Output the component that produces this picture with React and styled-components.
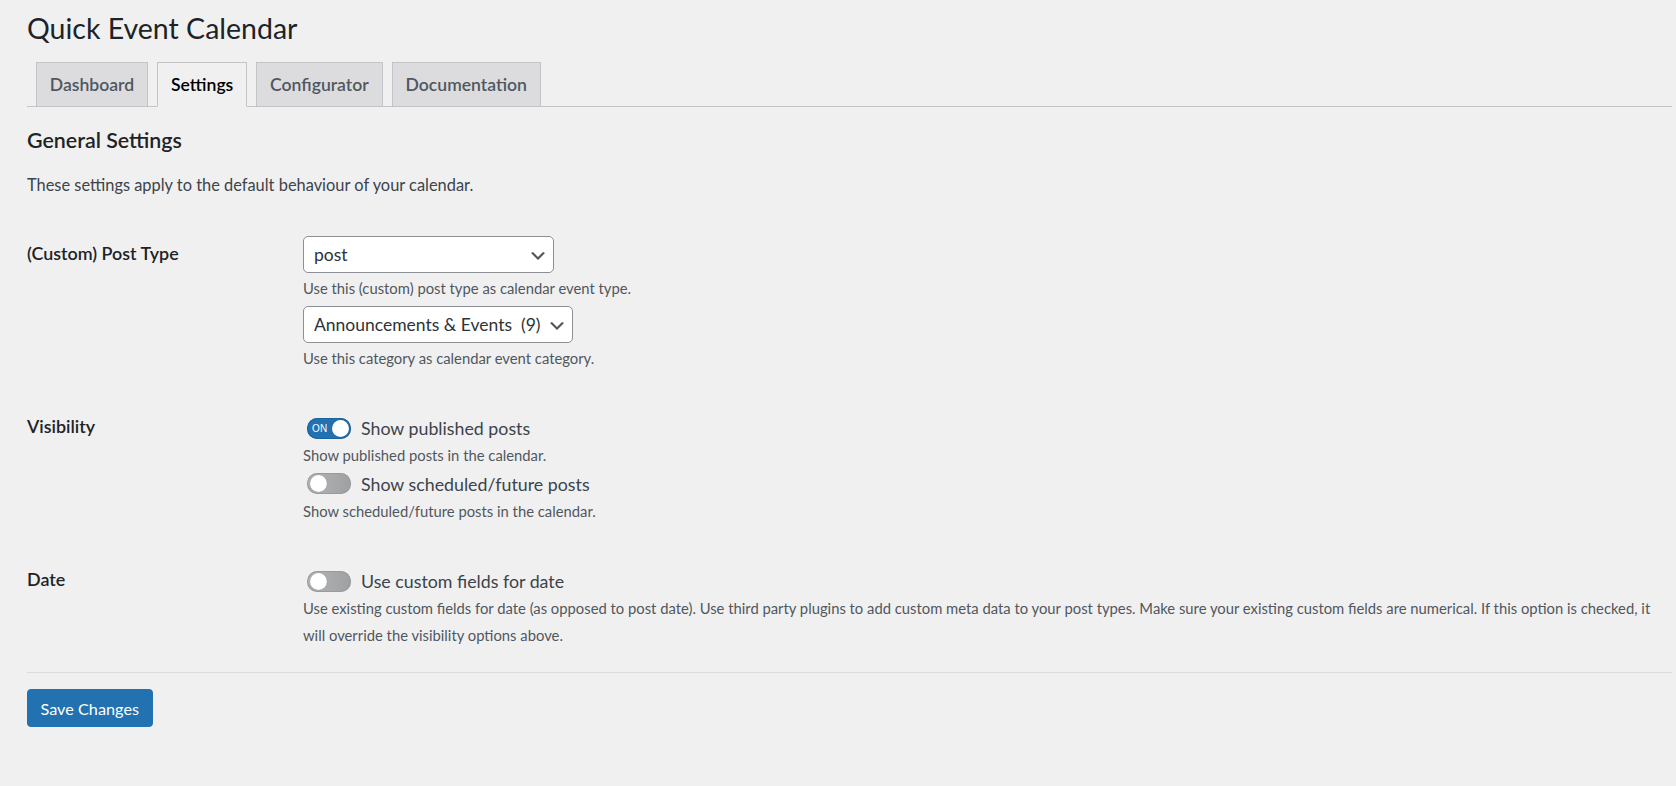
import React from "react";
import styled, { createGlobalStyle } from "styled-components";

const FONT = `"Lato", "Segoe UI", "Liberation Sans", sans-serif`;

const GlobalStyle = createGlobalStyle`
  html, body { margin: 0; padding: 0; background: #f0f0f1; }
  body { font-family: ${FONT}; color: #3c434a; }
  * { box-sizing: border-box; }
`;

const Wrap = styled.div`
  padding: 0 4px 40px 27px;
`;

const Title = styled.h1`
  margin: 0;
  padding-top: 10px;
  font-size: 28.5px;
  line-height: 37px;
  font-weight: 400;
  color: #1d2327;
`;

const TabBar = styled.nav`
  display: flex;
  align-items: flex-end;
  margin-top: 15px;
  border-bottom: 1px solid #c3c4c7;
`;

const Tab = styled.a`
  display: block;
  height: 45px;
  margin: 0 0 -1px 8.75px;
  padding: 6.5px 13px;
  border: 1px solid #c3c4c7;
  border-bottom-color: ${(p) => (p.$active ? "#f0f0f1" : "#c3c4c7")};
  background: ${(p) => (p.$active ? "#f0f0f1" : "#dcdcde")};
  color: ${(p) => (p.$active ? "#000" : "#50575e")};
  font-size: 17.6px;
  font-weight: 600;
  line-height: 30px;
  text-decoration: none;
  white-space: nowrap;
  cursor: pointer;
`;

const SectionTitle = styled.h2`
  margin: 19px 0 0;
  font-size: 21.4px;
  line-height: 29.5px;
  font-weight: 600;
  color: #1d2327;
`;

const Intro = styled.p`
  margin: 17px 0 0;
  font-size: 16.4px;
  line-height: 24.4px;
  color: #3c434a;
`;

const FormTable = styled.div`
  margin-top: 20px;
`;

const Row = styled.div`
  display: grid;
  grid-template-columns: 276px 1fr;
  padding: 19px 0;
`;

const Label = styled.div`
  margin-top: 6px;
  font-size: 17.9px;
  line-height: 22px;
  font-weight: 600;
  color: #1d2327;
`;

const Field = styled.div`
  display: flex;
  flex-direction: column;
  align-items: flex-start;
  min-width: 0;
`;

const SelectWrap = styled.div`
  position: relative;
  width: ${(p) => p.$width}px;
  margin-top: ${(p) => p.$mt || 0}px;
`;

const Select = styled.select`
  appearance: none;
  -webkit-appearance: none;
  display: block;
  width: 100%;
  height: 37px;
  margin: 0;
  padding: 0 30px 0 10px;
  border: 1px solid #8c8f94;
  border-radius: 5px;
  background: #fff;
  color: #2c3338;
  font-family: ${FONT};
  font-size: 17.5px;
  line-height: 35px;
  outline: none;
`;

const Chevron = styled.svg`
  position: absolute;
  right: 6px;
  top: 55%;
  width: 20px;
  height: 20px;
  transform: translateY(-50%);
  pointer-events: none;
`;

const Help = styled.p`
  margin: ${(p) => p.$mt ?? 2}px 0 0;
  font-size: 14.8px;
  line-height: 26.6px;
  color: #50575e;
`;

const ToggleRow = styled.label`
  display: flex;
  align-items: center;
  height: 26px;
  margin-top: ${(p) => (p.$first ? 6 : 2)}px;
  cursor: pointer;
`;

const Track = styled.span`
  position: relative;
  flex: none;
  width: 44px;
  height: 21px;
  margin: 0 10px 0 4px;
  border-radius: 11px;
  background: ${(p) =>
    p.$on ? "#2271b1" : "linear-gradient(to right, #b4b5b7, #9ea0a2)"};
  box-shadow: inset 0 0 0 1px ${(p) => (p.$on ? "#1d629b" : "#999b9d")};
`;

const Knob = styled.span`
  position: absolute;
  top: 2px;
  left: ${(p) => (p.$on ? 24.5 : 2.5)}px;
  width: 17px;
  height: 17px;
  border-radius: 50%;
  background: #fff;
  box-shadow: 0 0 1px rgba(0, 0, 0, 0.3);
`;

const OnText = styled.span`
  position: absolute;
  left: 5px;
  top: 0;
  line-height: 21px;
  font-family: "Liberation Sans", Arial, sans-serif;
  font-size: 10px;
  letter-spacing: 0.3px;
  color: #fff;
`;

const ToggleText = styled.span`
  font-size: 17.8px;
  line-height: 26px;
  color: #3c434a;
`;

const Divider = styled.div`
  height: 1px;
  margin-top: 5px;
  background: #dcdcde;
`;

const SaveButton = styled.button`
  display: block;
  margin-top: 16px;
  height: 37.5px;
  padding: 0 12.5px;
  border: 1px solid #2271b1;
  border-radius: 3.75px;
  background: #2271b1;
  color: #fff;
  font-family: ${FONT};
  font-size: 16.25px;
  line-height: 35px;
  cursor: pointer;
`;

function SelectField({ width, mt, value }) {
  return (
    <SelectWrap $width={width} $mt={mt}>
      <Select defaultValue={value}>
        <option value={value}>{value}</option>
      </Select>
      <Chevron viewBox="0 0 20 20" aria-hidden="true">
        <path d="M5 6l5 5 5-5 2 1-7 7-7-7 2-1z" fill="#555" />
      </Chevron>
    </SelectWrap>
  );
}

function Toggle({ on, first, label }) {
  return (
    <ToggleRow $first={first}>
      <Track $on={on}>
        {on && <OnText>ON</OnText>}
        <Knob $on={on} />
      </Track>
      <ToggleText>{label}</ToggleText>
    </ToggleRow>
  );
}

export default function App() {
  return (
    <>
      <GlobalStyle />
      <Wrap>
        <Title>Quick Event Calendar</Title>
        <TabBar>
          <Tab>Dashboard</Tab>
          <Tab $active>Settings</Tab>
          <Tab>Configurator</Tab>
          <Tab>Documentation</Tab>
        </TabBar>
        <SectionTitle>General Settings</SectionTitle>
        <Intro>These settings apply to the default behaviour of your calendar.</Intro>
        <FormTable>
          <Row>
            <Label>(Custom) Post Type</Label>
            <Field>
              <SelectField width={251} value="post" />
              <Help>Use this (custom) post type as calendar event type.</Help>
              <SelectField width={270} mt={4} value={"Announcements & Events\u00a0\u00a0(9)"} />
              <Help>Use this category as calendar event category.</Help>
            </Field>
          </Row>
          <Row>
            <Label>Visibility</Label>
            <Field>
              <Toggle on first label="Show published posts" />
              <Help $mt={1}>Show published posts in the calendar.</Help>
              <Toggle label="Show scheduled/future posts" />
              <Help $mt={1}>Show scheduled/future posts in the calendar.</Help>
            </Field>
          </Row>
          <Row>
            <Label>Date</Label>
            <Field>
              <Toggle first label="Use custom fields for date" />
              <Help $mt={1}>
                Use existing custom fields for date (as opposed to post date). Use third party plugins to add custom meta data to your post types. Make sure your existing custom fields are numerical. If this option is checked, it will override the visibility options above.
              </Help>
            </Field>
          </Row>
        </FormTable>
        <Divider />
        <SaveButton type="button">Save Changes</SaveButton>
      </Wrap>
    </>
  );
}
